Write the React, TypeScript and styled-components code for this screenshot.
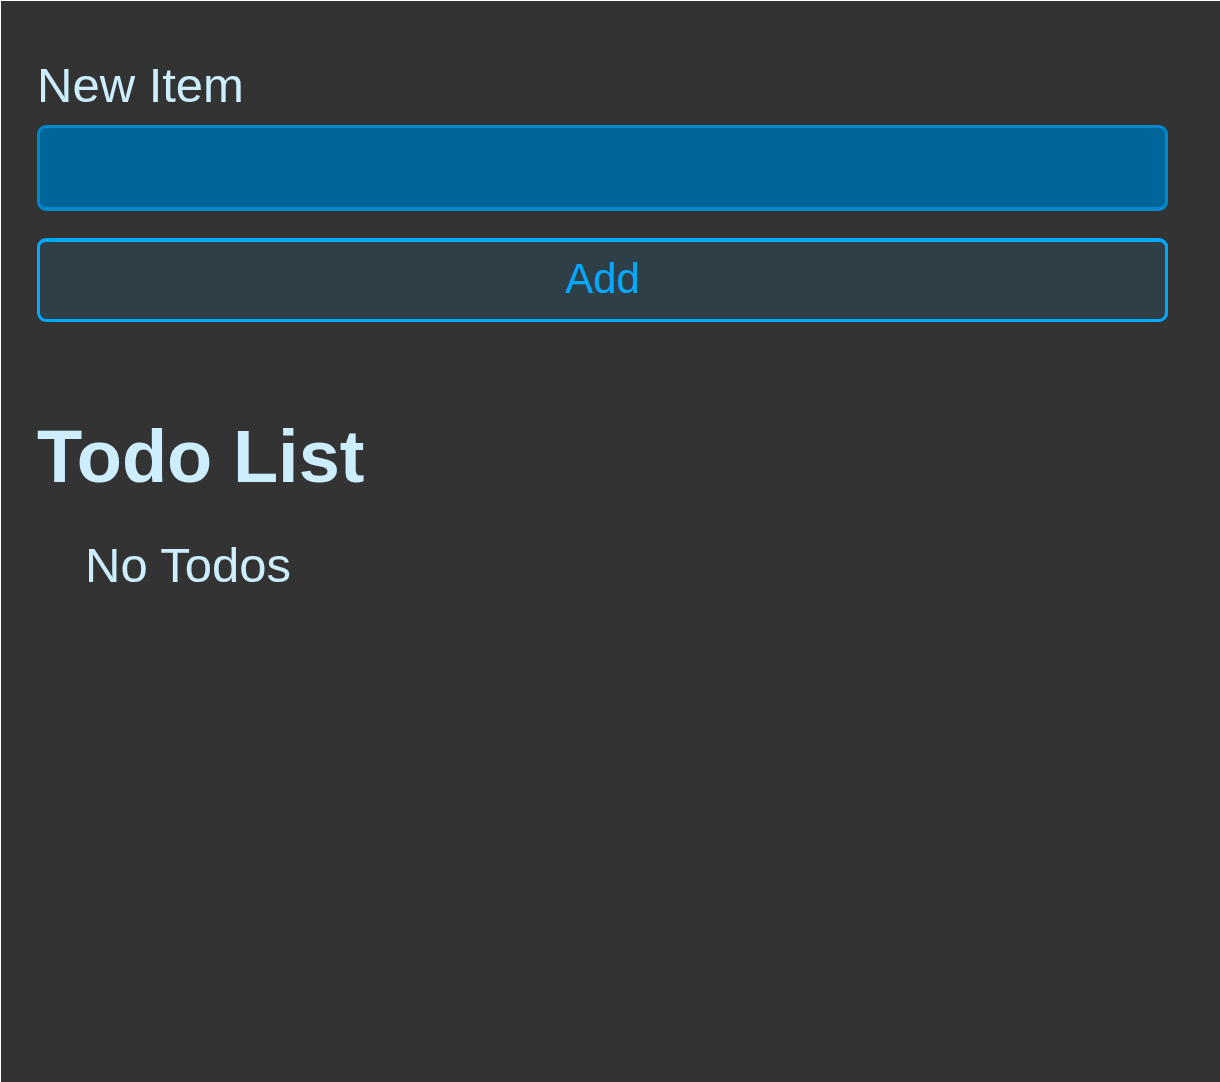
import React, { useState } from "react";
import styled, { createGlobalStyle } from "styled-components";

const GlobalStyle = createGlobalStyle`
  *, *::before, *::after { box-sizing: border-box; }
  body {
    margin: 0;
    background: #333;
    color: #cef;
    font-family: "Liberation Sans", Arial, sans-serif;
  }
`;

const Page = styled.main`
  min-height: 100vh;
  padding: 54px 52px 36px 36px;
  border-top: 1px solid #fff;
  border-left: 1px solid #fff;
  font-size: 49px;
  line-height: 60px;
`;

const Form = styled.form`
  display: flex;
  flex-direction: column;
  gap: 27px;
`;

const Field = styled.div`
  display: flex;
  flex-direction: column;
  gap: 10px;
`;

const TextInput = styled.input`
  width: 100%;
  height: 86px;
  padding: 8px 16px;
  border: solid #08c;
  border-width: 3px 3px 4px;
  border-radius: 9px;
  outline: none;
  background: #069;
  color: #cef;
  font: inherit;
`;

const AddButton = styled.button`
  height: 84px;
  padding: 0 16px 4px;
  border: solid #0af;
  border-width: 4px 3px 3px;
  border-radius: 9px;
  background: #2e3f48;
  color: #0af;
  font-family: inherit;
  font-size: 42px;
  line-height: 60px;
  cursor: pointer;
`;

const Heading = styled.h1`
  margin: 93px 0 36px;
  font-size: 74px;
  line-height: 84px;
  font-weight: 700;
`;

const List = styled.ul`
  margin: 0;
  padding: 0 0 0 48px;
  list-style: none;
`;

export default function App() {
  const [item, setItem] = useState("");
  const [todos, setTodos] = useState<string[]>([]);

  function handleSubmit(event: React.FormEvent) {
    event.preventDefault();
    if (item === "") return;
    setTodos((current) => [...current, item]);
    setItem("");
  }

  return (
    <>
      <GlobalStyle />
      <Page>
        <Form onSubmit={handleSubmit}>
          <Field>
            <label htmlFor="item">New Item</label>
            <TextInput
              id="item"
              type="text"
              value={item}
              onChange={(event) => setItem(event.target.value)}
            />
          </Field>
          <AddButton type="submit">Add</AddButton>
        </Form>
        <Heading>Todo List</Heading>
        <List>
          {todos.length === 0 && <li>No Todos</li>}
          {todos.map((todo, index) => (
            <li key={index}>{todo}</li>
          ))}
        </List>
      </Page>
    </>
  );
}
